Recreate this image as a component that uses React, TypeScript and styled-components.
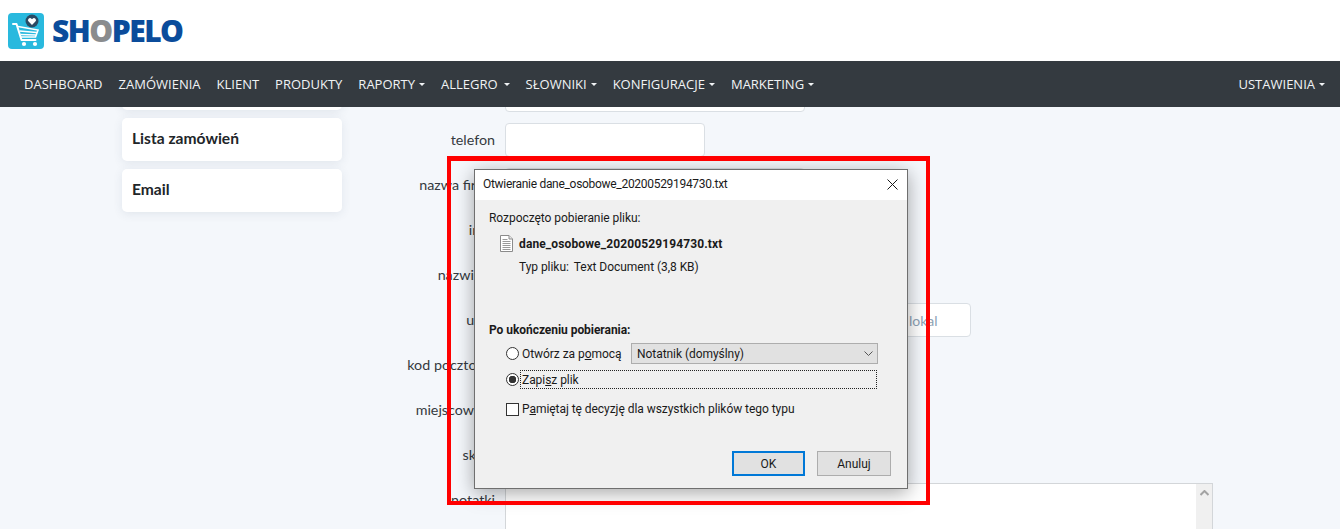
import React from "react";
import styled, { createGlobalStyle } from "styled-components";

const GlobalStyle = createGlobalStyle`
  html, body {
    margin: 0;
    padding: 0;
    height: 529px;
    overflow: hidden;
    background: #f4f7fb;
  }
  * { box-sizing: border-box; }
`;

const navLinks = [
  { label: "DASHBOARD" },
  { label: "ZAMÓWIENIA" },
  { label: "KLIENT" },
  { label: "PRODUKTY" },
  { label: "RAPORTY", caret: true },
  { label: "ALLEGRO", caret: true, wide: true },
  { label: "SŁOWNIKI", caret: true },
  { label: "KONFIGURACJE", caret: true },
  { label: "MARKETING", caret: true },
];

const formRows = ["nazwa firmy", "imię", "nazwisko"];
const lowerRows = ["kod pocztowy", "miejscowość", "sklep"];

const LogoIcon = () => (
  <svg width="36" height="36" viewBox="0 0 36 36">
    <rect width="36" height="36" rx="4" fill="#29b9de" />
    <path
      d="M5 11h3.5l5 16h14"
      fill="none"
      stroke="#fff"
      strokeWidth="2"
      strokeLinecap="round"
      strokeLinejoin="round"
    />
    <path
      d="M10 13.5l20 3.5-2.5 7-14.5 0M11.5 18l17 1.5M12.5 21.5l15 .5"
      fill="none"
      stroke="#fff"
      strokeWidth="1.6"
    />
    <circle cx="16" cy="31" r="2.1" fill="#fff" />
    <circle cx="27" cy="31" r="2.1" fill="#fff" />
    <circle cx="24" cy="8" r="6.5" fill="#2a4a63" />
    <path d="M24 12l-3.4-3.4a2 2 0 0 1 2.9-2.9l.5.5.5-.5a2 2 0 0 1 2.9 2.9z" fill="#fff" />
  </svg>
);

const FileIcon = () => (
  <svg width="13" height="17" viewBox="0 0 13 17">
    <path d="M.5.5h8.5l3.5 3.5v12.5H.5z" fill="#fff" stroke="#8b8b8b" />
    <path d="M9 .5v3.5h3.5" fill="#e8e8e8" stroke="#8b8b8b" />
    <path d="M2.5 4.5h5M2.5 6.5h8M2.5 8.5h8M2.5 10.5h8M2.5 12.5h8M2.5 14.5h8" stroke="#9a9a9a" />
  </svg>
);

const App: React.FC = () => {
  return (
    <Page>
      <GlobalStyle />
      <TopBar>
        <LogoIcon />
        <LogoText>
          SH<LogoGray>O</LogoGray>PELO
        </LogoText>
      </TopBar>

      <NavBar>
        <NavGroup>
          {navLinks.map((link) => (
            <NavLink key={link.label}>
              {link.label}
              {link.caret && <Caret $wide={link.wide} />}
            </NavLink>
          ))}
        </NavGroup>
        <NavLink>
          USTAWIENIA
          <Caret />
        </NavLink>
      </NavBar>

      <Viewport>
        <Scrolled>
          <Sidebar>
            <SideCard />
            <SideCard>Lista zamówień</SideCard>
            <SideCard>Email</SideCard>
          </Sidebar>

          <Form>
            <FormRow>
              <FieldLabel />
              <TextInput $width={300} />
            </FormRow>
            <FormRow>
              <FieldLabel>telefon</FieldLabel>
              <TextInput $width={200} />
            </FormRow>
            {formRows.map((label) => (
              <FormRow key={label}>
                <FieldLabel>{label}</FieldLabel>
                <TextInput $width={300} />
              </FormRow>
            ))}
            <FormRow>
              <FieldLabel>ulica</FieldLabel>
              <InputGroup>
                <TextInput $width={200} />
                <TextInput $width={100} placeholder="numer" />
                <TextInput $width={118} placeholder="numer lokal" />
              </InputGroup>
            </FormRow>
            {lowerRows.map((label) => (
              <FormRow key={label}>
                <FieldLabel>{label}</FieldLabel>
                <TextInput $width={300} />
              </FormRow>
            ))}
            <FormRow $alignTop>
              <FieldLabel $topPad>notatki</FieldLabel>
              <NotesBox>
                <NotesText />
                <NotesScrollbar>
                  <svg width="9" height="6" viewBox="0 0 9 6">
                    <path d="M.5 5L4.5 1l4 4" fill="none" stroke="#a3a3a3" strokeWidth="2" />
                  </svg>
                </NotesScrollbar>
              </NotesBox>
            </FormRow>
          </Form>
        </Scrolled>
      </Viewport>

      <Highlight />

      <Dialog>
        <TitleBar>
          <DialogTitle>Otwieranie dane_osobowe_20200529194730.txt</DialogTitle>
          <CloseIcon width="11" height="11" viewBox="0 0 11 11">
            <path d="M.5.5l10 10M10.5.5l-10 10" stroke="#1a1a1a" strokeWidth="1" fill="none" />
          </CloseIcon>
        </TitleBar>

        <DialogBody>
          <DialogText>Rozpoczęto pobieranie pliku:</DialogText>
          <FileRow>
            <FileIcon />
            <strong>dane_osobowe_20200529194730.txt</strong>
          </FileRow>
          <TypeRow>
            <span>Typ pliku:</span>
            <span>Text Document (3,8 KB)</span>
          </TypeRow>

          <SectionTitle>Po ukończeniu pobierania:</SectionTitle>

          <OptionRow>
            <RadioMark />
            <OptionLabel $narrow>
              Otwórz za p<u>o</u>mocą
            </OptionLabel>
            <FakeSelect>
              Notatnik (domyślny)
              <svg width="9" height="5" viewBox="0 0 9 5">
                <path d="M.5.5l4 4 4-4" fill="none" stroke="#555" />
              </svg>
            </FakeSelect>
          </OptionRow>

          <OptionRow>
            <RadioMark $checked />
            <FocusLabel>
              Zapi<u>s</u>z plik
            </FocusLabel>
          </OptionRow>

          <CheckRow>
            <CheckMark />
            <OptionLabel>
              P<u>a</u>miętaj tę decyzję dla wszystkich plików tego typu
            </OptionLabel>
          </CheckRow>

          <ButtonRow>
            <DialogButton $primary>OK</DialogButton>
            <DialogButton>Anuluj</DialogButton>
          </ButtonRow>
        </DialogBody>
      </Dialog>
    </Page>
  );
};

export default App;

const Page = styled.div`
  position: relative;
  height: 529px;
  overflow: hidden;
  background: #f4f7fb;
`;

const TopBar = styled.header`
  height: 61px;
  background: #fff;
  display: flex;
  align-items: center;
  padding: 0 0 0 8px;
  gap: 8px;
`;

const LogoText = styled.div`
  font-family: "Open Sans", sans-serif;
  font-weight: 800;
  font-size: 30px;
  letter-spacing: -1.5px;
  color: #0b4c9b;
  line-height: 1;
`;

const LogoGray = styled.span`
  color: #8a8c8e;
`;

const NavBar = styled.nav`
  height: 46px;
  background: #343a40;
  display: flex;
  align-items: center;
  justify-content: space-between;
  padding: 0 7px 0 16px;
  position: relative;
  z-index: 2;
`;

const NavGroup = styled.div`
  display: flex;
  align-items: center;
`;

const NavLink = styled.a`
  font-family: "Open Sans", sans-serif;
  font-size: 13px;
  color: #f1f3f5;
  padding: 0 8px;
  display: flex;
  align-items: center;
  white-space: nowrap;
`;

const Caret = styled.span<{ $wide?: boolean }>`
  width: 0;
  height: 0;
  margin-left: ${(p) => (p.$wide ? "6px" : "4px")};
  border-left: 3px solid transparent;
  border-right: 3px solid transparent;
  border-top: 3px solid #f1f3f5;
`;

const Viewport = styled.main`
  height: 422px;
  overflow: hidden;
`;

const Scrolled = styled.div`
  display: flex;
  align-items: flex-start;
  margin-top: -40px;
  padding-left: 122px;
`;

const Sidebar = styled.aside`
  width: 220px;
  display: flex;
  flex-direction: column;
  gap: 8px;
  flex: none;
`;

const SideCard = styled.div`
  height: 43px;
  background: #fff;
  border-radius: 5px;
  padding: 0 10px 3px;
  display: flex;
  align-items: center;
  font-family: Lato, sans-serif;
  font-weight: 700;
  font-size: 15.6px;
  color: #212529;
  box-shadow: 0 2px 10px rgba(60, 80, 110, 0.1);
`;

const Form = styled.form`
  margin-left: 8px;
  padding-top: 11px;
  width: 863px;
  display: flex;
  flex-direction: column;
  gap: 11px;
`;

const FormRow = styled.div<{ $alignTop?: boolean }>`
  display: grid;
  grid-template-columns: 145px 1fr;
  column-gap: 10px;
  align-items: ${(p) => (p.$alignTop ? "start" : "center")};
`;

const FieldLabel = styled.label<{ $topPad?: boolean }>`
  font-family: Lato, sans-serif;
  font-size: 14.3px;
  color: #343a40;
  text-align: right;
  white-space: nowrap;
  padding-top: ${(p) => (p.$topPad ? "8px" : "0")};
  padding-bottom: ${(p) => (p.$topPad ? "0" : "2px")};
`;

const TextInput = styled.input<{ $width: number }>`
  width: ${(p) => p.$width}px;
  height: 34px;
  background: #fff;
  border: 1px solid #dadfe4;
  border-radius: 4px;
  padding: 0 12px;
  font-family: Lato, sans-serif;
  font-size: 14px;
  flex: none;

  &::placeholder {
    color: #8da2b5;
    opacity: 1;
  }
`;

const InputGroup = styled.div`
  display: flex;
  gap: 24px;
`;

const NotesBox = styled.div`
  height: 120px;
  width: 708px;
  background: #fff;
  border: 1px solid #d3d6d9;
  display: flex;
  justify-content: flex-end;
`;

const NotesText = styled.div`
  flex: 1;
`;

const NotesScrollbar = styled.div`
  width: 16px;
  background: #f0f0f0;
  display: flex;
  justify-content: center;
  padding-top: 6px;
`;

const Highlight = styled.div`
  position: absolute;
  left: 447px;
  top: 156px;
  width: 483px;
  height: 349px;
  border: 4px solid #ff0000;
  border-top-width: 5px;
  z-index: 4;
  pointer-events: none;
`;

const Dialog = styled.section`
  position: absolute;
  left: 474px;
  top: 169px;
  width: 434px;
  height: 320px;
  background: #f0f0f0;
  border: 1px solid #6f6f6f;
  box-shadow: 0 4px 18px rgba(0, 0, 0, 0.35);
  z-index: 3;
  font-family: Roboto, sans-serif;
  font-size: 12px;
  letter-spacing: -0.05px;
  color: #1a1a1a;
  display: flex;
  flex-direction: column;
`;

const TitleBar = styled.div`
  height: 30px;
  background: #fff;
  display: flex;
  align-items: center;
  justify-content: space-between;
  padding: 0 9px 2px 8px;
  flex: none;
`;

const DialogTitle = styled.span`
  letter-spacing: -0.3px;
`;

const CloseIcon = styled.svg`
  flex: none;
`;

const DialogBody = styled.div`
  flex: 1;
  padding: 10px 16px 12px 14px;
  display: flex;
  flex-direction: column;
  position: relative;

  u {
    text-underline-offset: 1px;
  }
`;

const DialogText = styled.div`
  line-height: 16px;
`;

const FileRow = styled.div`
  display: flex;
  align-items: center;
  gap: 6px;
  margin: 9px 0 0 11px;

  strong {
    font-weight: 700;
    letter-spacing: 0.12px;
  }
`;

const TypeRow = styled.div`
  display: flex;
  gap: 5px;
  margin: 7px 0 0 30px;
  line-height: 16px;
`;

const SectionTitle = styled.div`
  font-weight: 700;
  line-height: 16px;
  margin-top: 47px;
`;

const OptionRow = styled.div`
  display: flex;
  align-items: center;
  padding-left: 17px;
  height: 21px;
  margin-top: 5px;
`;

const RadioMark = styled.span<{ $checked?: boolean }>`
  width: 13px;
  height: 13px;
  border-radius: 50%;
  border: 1px solid #333;
  background: ${(p) => (p.$checked ? "radial-gradient(circle, #333 0 3.5px, #fff 4px)" : "#fff")};
  flex: none;
`;

const OptionLabel = styled.span<{ $narrow?: boolean }>`
  margin-left: 3px;
  width: ${(p) => (p.$narrow ? "109px" : "auto")};
  white-space: nowrap;
  flex: none;
`;

const FakeSelect = styled.div`
  width: 247px;
  height: 21px;
  background: #e1e1e1;
  border: 1px solid #adadad;
  display: flex;
  align-items: center;
  justify-content: space-between;
  padding: 0 4px 0 5px;
`;

const FocusLabel = styled.span`
  margin-left: 1px;
  width: 357px;
  height: 19px;
  border: 1px dotted #222;
  padding-left: 1px;
  display: flex;
  align-items: center;
  white-space: pre;
`;

const CheckRow = styled.div`
  display: flex;
  align-items: center;
  padding-left: 17px;
  margin-top: 11px;
  height: 16px;
`;

const CheckMark = styled.span`
  width: 13px;
  height: 13px;
  border: 1px solid #333;
  background: #fff;
  flex: none;
`;

const ButtonRow = styled.div`
  position: absolute;
  right: 16px;
  bottom: 12px;
  display: flex;
  gap: 12px;
`;

const DialogButton = styled.button<{ $primary?: boolean }>`
  width: ${(p) => (p.$primary ? "73px" : "74px")};
  height: 25px;
  background: #e1e1e1;
  border: ${(p) => (p.$primary ? "2px solid #0078d7" : "1px solid #adadad")};
  font-family: Roboto, sans-serif;
  font-size: 12px;
  color: #1a1a1a;
  padding: 0;
`;
